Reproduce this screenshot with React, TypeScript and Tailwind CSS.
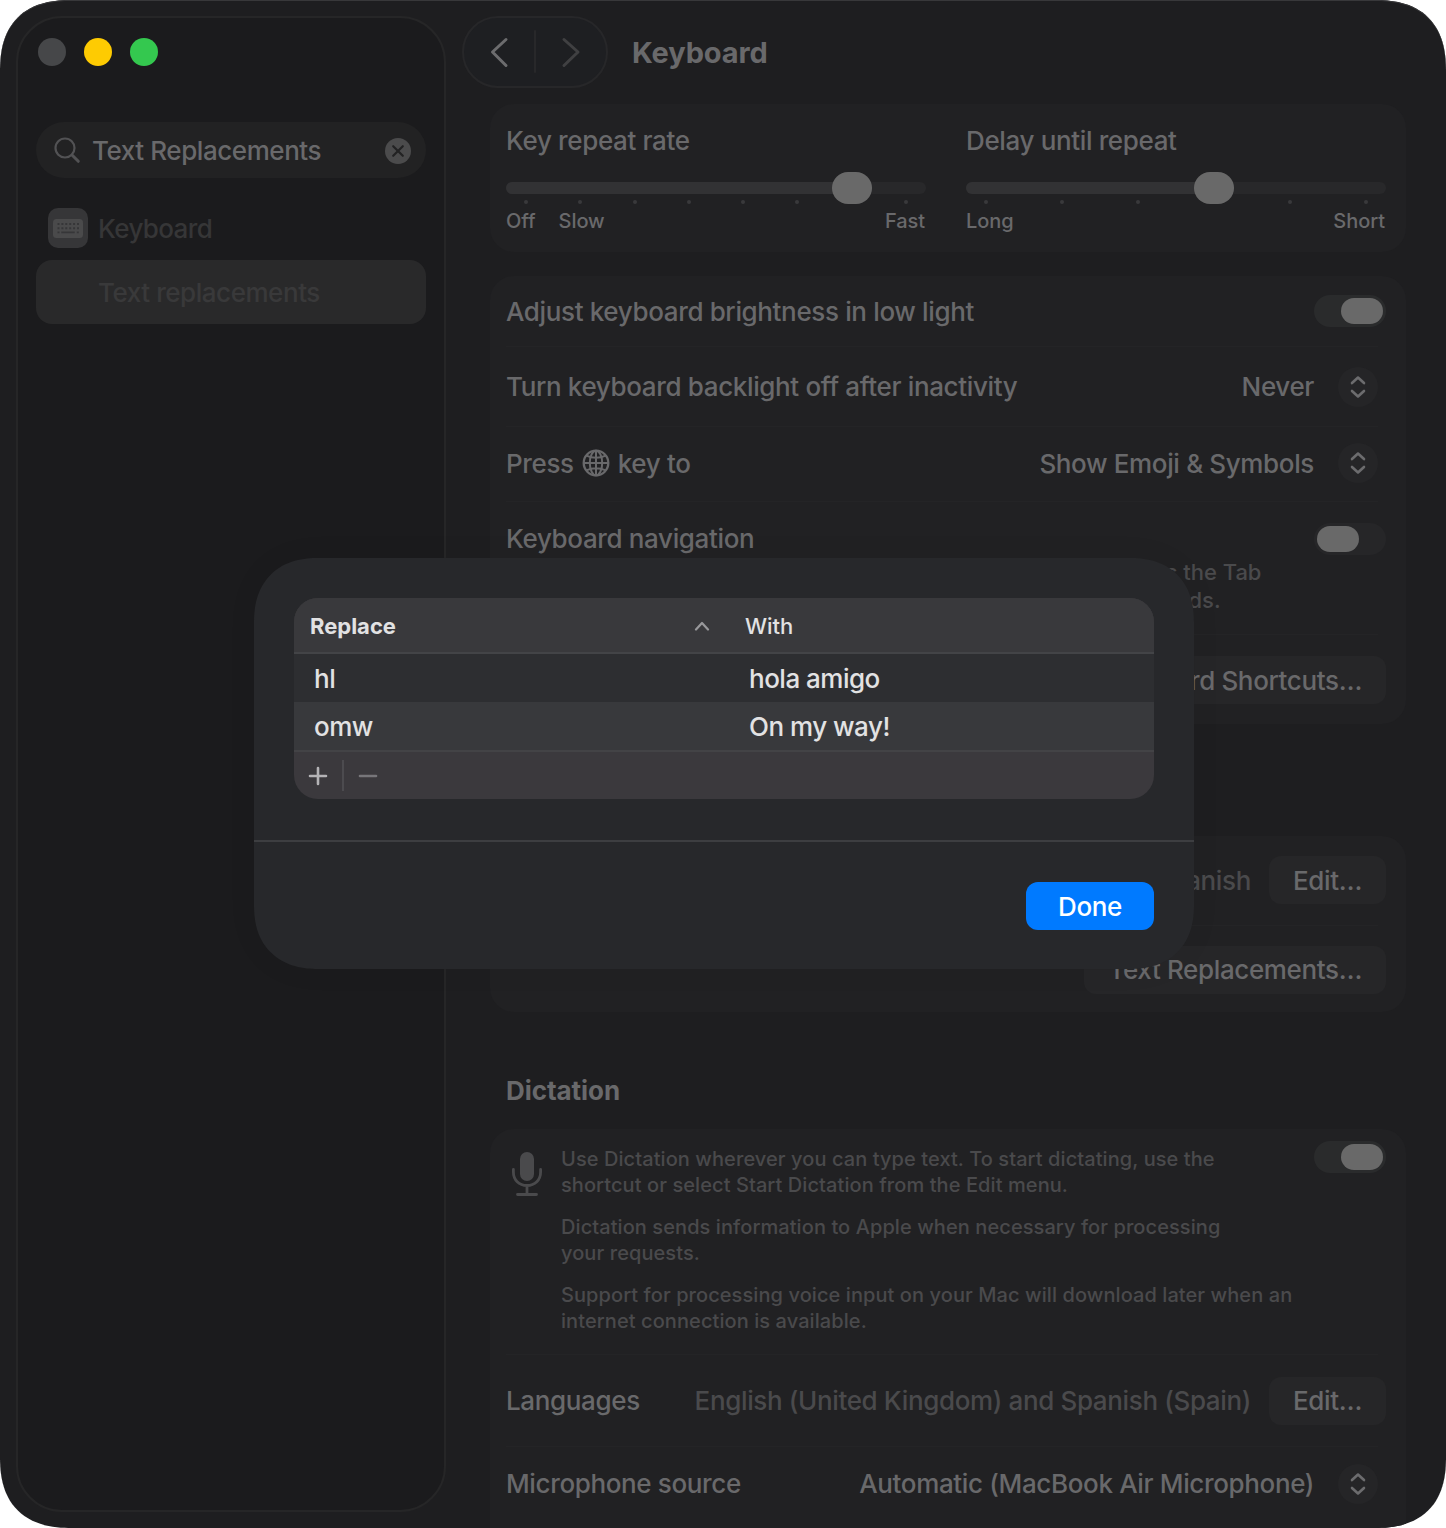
import React from 'react';

const Toggle = ({ on }: { on: boolean }) => (
  <div
    className={
      on
        ? 'flex h-8 w-[72px] shrink-0 items-center justify-end rounded-full bg-[#2a2b2c] px-[3px]'
        : 'flex h-8 w-[72px] shrink-0 items-center justify-start rounded-full bg-[#262628] px-[3px]'
    }
  >
    <div className="h-[26px] w-[42px] rounded-full bg-[#696969]" />
  </div>
);

const Stepper = () => (
  <div className="mr-2 ml-[24px] flex h-10 w-10 shrink-0 items-center justify-center rounded-full bg-[#252527]">
    <svg width="20" height="26" viewBox="0 0 20 26" fill="none" stroke="#6c6c6e" strokeWidth="2.6" strokeLinecap="round" strokeLinejoin="round">
      <path d="M4 9 L10 3.5 L16 9" />
      <path d="M4 17 L10 22.5 L16 17" />
    </svg>
  </div>
);

const PushButton = ({ children }: { children: React.ReactNode }) => (
  <div className="flex h-12 shrink-0 items-center rounded-xl bg-[#262628] px-6">{children}</div>
);

const Divider = () => <div className="mr-2 h-px shrink-0 bg-[#242426]" />;

const Slider = ({ title, value, ticks, labels }: { title: string; value: number; ticks: number; labels: React.ReactNode }) => (
  <div className="flex w-[420px] flex-col">
    <div className="h-8 leading-8">{title}</div>
    <div className="relative mt-[25px] h-3 rounded-full bg-[#28282a]">
      <div className="h-3 rounded-full bg-[#323234]" style={{ width: value }} />
      <div className="absolute -top-[10px] h-8 w-10 rounded-full bg-[#696969]" style={{ left: value - 20 }} />
    </div>
    <div className="mt-[6px] flex h-1 justify-between px-[18px]">
      {Array.from({ length: ticks }, (_, i) => (
        <div key={i} className="h-1 w-1 rounded-full bg-[#39393b]" />
      ))}
    </div>
    <div className="mt-[3px] flex h-7 text-[20px] leading-7 tracking-[-0.05px]">{labels}</div>
  </div>
);

const Sidebar = () => (
  <aside className="mt-4 ml-4 flex h-[1496px] w-[430px] shrink-0 flex-col rounded-[46px] border-2 border-[#262627] bg-[#1b1b1d] px-[18px]">
    <div className="mt-[20px] flex gap-[18px] pl-[2px]">
      <div className="h-7 w-7 rounded-full bg-[#464749]" />
      <div className="h-7 w-7 rounded-full bg-[#fecb02]" />
      <div className="h-7 w-7 rounded-full bg-[#34c84f]" />
    </div>
    <div className="mt-[56px] flex h-14 items-center rounded-full bg-[#222223] pr-[15px] pl-[17px]">
      <svg width="28" height="28" viewBox="0 0 28 28" fill="none" stroke="#525254" strokeLinecap="round">
        <circle cx="12" cy="12" r="9.5" strokeWidth="2.2" />
        <path d="M19 19 L25.3 25.3" strokeWidth="3" />
      </svg>
      <span className="ml-[11px] flex-1 text-[26px] tracking-[-0.43px] text-[#69696b]">Text Replacements</span>
      <svg className="mt-[2px]" width="26" height="26" viewBox="0 0 26 26">
        <circle cx="13" cy="13" r="13" fill="#4b4b4c" />
        <path d="M8.2 8.2 L17.8 17.8 M17.8 8.2 L8.2 17.8" stroke="#222223" strokeWidth="2.2" strokeLinecap="round" />
      </svg>
    </div>
    <div className="mt-[30px] flex h-10 items-center pl-3">
      <div className="flex h-10 w-10 items-center justify-center rounded-[10px] bg-[#363638]">
        <svg width="30" height="19" viewBox="0 0 30 19">
          <rect width="30" height="19" rx="3.5" fill="#4a4a4b" />
          <path d="M4.5 5H26M4.5 9.2H26" stroke="#363638" strokeWidth="2" strokeDasharray="2 1.9" />
          <path d="M4.5 13.4h2M8.3 13.4h13.4M23.8 13.4h2" stroke="#363638" strokeWidth="1.8" />
        </svg>
      </div>
      <span className="ml-[10px] text-[26px] tracking-[-0.62px] text-[#363637]">Keyboard</span>
    </div>
    <div className="mt-3 flex h-16 items-center rounded-2xl bg-[#29292a] pl-[62px] text-[26px] tracking-[-0.45px] text-[#39393a]">
      Text replacements
    </div>
  </aside>
);

const Toolbar = () => (
  <header className="flex h-[104px] shrink-0 items-start pt-4 pl-4">
    <div className="flex h-[72px] w-[146px] items-center rounded-full border-2 border-[#272729] bg-[#1e1f22]">
      <svg width="142" height="68" viewBox="0 0 142 68" fill="none" strokeWidth="3" strokeLinecap="round" strokeLinejoin="round">
        <path d="M42 21.5 L28.5 34 L42 47.5" stroke="#6c6c6e" />
        <path d="M71 13 V54" stroke="#28282a" strokeWidth="2" />
        <path d="M100 21.5 L114 34 L100 47.5" stroke="#404042" />
      </svg>
    </div>
    <h1 className="ml-6 text-[29px] leading-[74px] font-bold tracking-[-0.1px]">Keyboard</h1>
  </header>
);

const GlobeIcon = () => (
  <svg className="mx-2" width="28" height="28" viewBox="0 0 28 28" fill="none" stroke="#69696b" strokeWidth="2">
    <circle cx="14" cy="14" r="12.3" strokeWidth="2.3" />
    <ellipse cx="14" cy="14" rx="6.2" ry="12.3" />
    <path d="M14 1.7V26.3M1.7 14H26.3M4.3 6.6Q14 10.8 23.7 6.6M4.3 21.4Q14 17.2 23.7 21.4" />
  </svg>
);

const MicIcon = () => (
  <svg className="mt-[22px] ml-[5px] shrink-0" width="32" height="46" viewBox="0 0 32 46" fill="none" stroke="#4a4a4c" strokeWidth="2.8" strokeLinecap="round">
    <rect x="9" y="1" width="14" height="29" rx="7" fill="#4a4a4c" stroke="none" />
    <path d="M2.4 18.5V21C2.4 29 8 34.5 16 34.5S29.6 29 29.6 21V18.5M16 34.5V43.5M6.5 43.5H25.5" />
  </svg>
);

const card = 'ml-11 mr-10 flex shrink-0 flex-col rounded-3xl bg-[#212123] pl-4 pr-5';

const Content = () => (
  <main className="flex w-[1000px] flex-col text-[26px] tracking-[-0.36px] text-[#69696b]">
    <Toolbar />

    <section className={`${card} h-[148px]`}>
      <div className="mt-[21px] flex justify-between">
        <Slider
          title="Key repeat rate"
          value={346}
          ticks={8}
          labels={
            <>
              <span>Off</span>
              <span className="ml-[23px]">Slow</span>
              <span className="ml-auto pr-px">Fast</span>
            </>
          }
        />
        <Slider
          title="Delay until repeat"
          value={248}
          ticks={6}
          labels={
            <>
              <span>Long</span>
              <span className="ml-auto pr-px">Short</span>
            </>
          }
        />
      </div>
    </section>

    <section className={`${card} mt-6 h-[448px]`}>
      <div className="flex h-[70px] items-center justify-between">
        <span>Adjust keyboard brightness in low light</span>
        <Toggle on />
      </div>
      <Divider />
      <div className="flex h-[79px] items-center">
        <span className="flex-1 pb-px">Turn keyboard backlight off after inactivity</span>
        <span>Never</span>
        <Stepper />
      </div>
      <Divider />
      <div className="flex h-[74px] items-center pb-[2px]">
        <span>Press</span>
        <GlobeIcon />
        <span className="flex-1">key to</span>
        <span>Show Emoji &amp; Symbols</span>
        <Stepper />
      </div>
      <Divider />
      <div className="flex h-[132px] justify-between pt-[21px]">
        <div>
          <div className="h-8 leading-8">Keyboard navigation</div>
          <div className="mt-[3px] w-[755px] text-right text-[22px] leading-7 tracking-[-0.05px] whitespace-nowrap text-[#4a4a4c]">
            <p>Use keyboard navigation to move focus between controls. Press the Tab</p>
            <p className="pr-[43px]">key to move focus forwards and Shift Tab to move focus backwards.</p>
          </div>
        </div>
        <Toggle on={false} />
      </div>
      <Divider />
      <div className="flex flex-1 items-center justify-end pt-px">
        <PushButton>Keyboard Shortcuts…</PushButton>
      </div>
    </section>

    <h2 className="mt-[54px] ml-[60px] h-8 shrink-0 leading-8 font-bold">Text Input</h2>

    <section className={`${card} mt-[26px] h-[176px]`}>
      <div className="flex h-[89px] items-center pb-px">
        <span className="flex-1">Input Sources</span>
        <span className="mr-[18px] text-[#4a4a4c]">Spanish</span>
        <PushButton>Edit…</PushButton>
      </div>
      <Divider />
      <div className="flex flex-1 items-center justify-end pt-px">
        <PushButton>Text Replacements…</PushButton>
      </div>
    </section>

    <h2 className="mt-[63px] ml-[60px] h-8 shrink-0 leading-8 font-bold tracking-[-0.05px]">Dictation</h2>

    <section className={`${card} mt-[22px] h-[440px]`}>
      <div className="flex h-[225px]">
        <MicIcon />
        <div className="mt-[17px] ml-[18px] flex flex-1 flex-col gap-4 text-[20px] leading-[26px] tracking-[0.08px] whitespace-nowrap text-[#4a4a4c]">
          <p>
            Use Dictation wherever you can type text. To start dictating, use the
            <br />
            shortcut or select Start Dictation from the Edit menu.
          </p>
          <p>
            Dictation sends information to Apple when necessary for processing
            <br />
            your requests.
          </p>
          <p>
            Support for processing voice input on your Mac will download later when an
            <br />
            internet connection is available.
          </p>
        </div>
        <div className="mt-3">
          <Toggle on />
        </div>
      </div>
      <Divider />
      <div className="flex h-[91px] items-center">
        <span className="flex-1">Languages</span>
        <span className="mr-[18px] text-[#4a4a4c]">English (United Kingdom) and Spanish (Spain)</span>
        <PushButton>Edit…</PushButton>
      </div>
      <Divider />
      <div className="flex h-[73px] items-center">
        <span className="flex-1 pb-px">Microphone source</span>
        <span>Automatic (MacBook Air Microphone)</span>
        <Stepper />
      </div>
    </section>
  </main>
);

const replacements = [
  { replace: 'hl', value: 'hola amigo', row: 'flex h-12 items-center bg-[#2d2e31] pl-5' },
  { replace: 'omw', value: 'On my way!', row: 'flex h-12 items-center bg-[#38393c] pl-5' },
];

const ReplacementsDialog = () => (
  <div className="absolute top-[558px] left-[254px] flex h-[411px] w-[940px] flex-col rounded-[64px] bg-[#27282b] text-[#e2e2e3] shadow-[0_0_30px_rgba(0,0,0,0.06)] [corner-shape:superellipse(1.2)]">
    <div className="mx-10 mt-10 flex h-[201px] flex-col overflow-hidden rounded-3xl bg-[#3b393d]">
      <div className="flex h-14 items-center border-b-2 border-[#434447] bg-[#39393c] pt-[2px] pl-4 text-[22px]">
        <span className="w-[384px] font-bold">Replace</span>
        <svg width="16" height="10" viewBox="0 0 16 10" fill="none" stroke="#98989b" strokeWidth="2.2" strokeLinecap="round" strokeLinejoin="round">
          <path d="M2 8.5 L8 2 L14 8.5" />
        </svg>
        <span className="ml-[35px]">With</span>
      </div>
      {replacements.map((item) => (
        <div key={item.replace} className={item.row}>
          <span className="w-[435px] text-[26px] tracking-[-0.5px]">{item.replace}</span>
          <span className="text-[26px] tracking-[-0.5px]">{item.value}</span>
        </div>
      ))}
      <div className="flex flex-1 items-center border-t-2 border-[#434346]">
        <svg width="96" height="40" viewBox="0 0 96 40" fill="none" strokeLinecap="round">
          <path d="M16 20H32M24 12V28" stroke="#b4b3b6" strokeWidth="2.6" />
          <path d="M49 4V35" stroke="#4c4b4f" strokeWidth="2" strokeLinecap="butt" />
          <path d="M66 20H82" stroke="#77767a" strokeWidth="2.6" />
        </svg>
      </div>
    </div>
    <div className="mt-[41px] h-[2px] shrink-0 bg-[#3d3e41]" />
    <div className="mt-10 mr-10 flex h-12 w-32 items-center justify-center self-end rounded-xl bg-[#007aff] text-[26px] font-medium tracking-[-0.4px] text-white">
      Done
    </div>
  </div>
);

export default function App() {
  return (
    <div className="h-[1528px] w-[1446px] overflow-hidden bg-white font-['Inter','Liberation_Sans',sans-serif] font-[450]">
      <div className="relative flex h-[1528px] w-[1446px] overflow-hidden rounded-[72px] bg-[#1e1e20] shadow-[inset_0_1px_0_#38383a] [corner-shape:superellipse(1.3)]">
        <Sidebar />
        <Content />
        <ReplacementsDialog />
      </div>
    </div>
  );
}
